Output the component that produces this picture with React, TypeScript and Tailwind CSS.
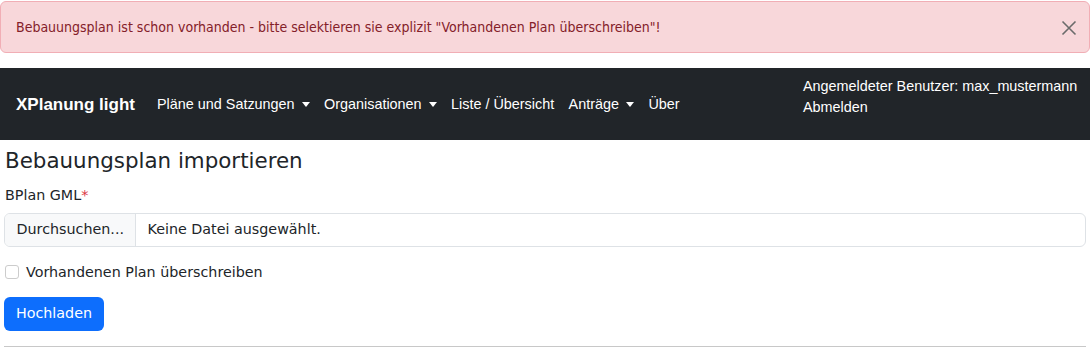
import React from 'react';

const navItems = [
  { label: 'Pläne und Satzungen', dropdown: true },
  { label: 'Organisationen', dropdown: true },
  { label: 'Liste / Übersicht', dropdown: false },
  { label: 'Anträge', dropdown: true },
  { label: 'Über', dropdown: false },
];

const Caret: React.FC = () => (
  <span className="ml-[7px] inline-block h-0 w-0 border-x-[4px] border-t-[5px] border-x-transparent border-t-white align-middle" />
);

const App: React.FC = () => {
  return (
    <div className="h-[358px] w-[1090px] overflow-hidden bg-white font-['DejaVu_Sans',sans-serif] text-[#212529]">
      {/* alert */}
      <div className="mx-0 mt-px flex h-[52px] items-center justify-between rounded-md border border-[#f1aeb5] bg-[#f8d7da] pl-[15px] pr-[12px] pt-px font-['DejaVu_Sans_Condensed','DejaVu_Sans',sans-serif] text-[14px] text-[#842029]">
        <span>Bebauungsplan ist schon vorhanden - bitte selektieren sie explizit "Vorhandenen Plan überschreiben"!</span>
        <svg width="16" height="16" viewBox="0 0 16 16" className="text-[#6b6b6b]">
          <path d="M1.5 1.5 L14.5 14.5 M14.5 1.5 L1.5 14.5" stroke="currentColor" strokeWidth="1.6" />
        </svg>
      </div>

      {/* navbar */}
      <nav className="mt-[15px] flex h-[72px] items-center bg-[#212529] pl-[16px] pt-[2px] font-['Liberation_Sans',Arial,sans-serif] text-white">
        <span className="mr-[22px] text-[17px] font-bold">XPlanung light</span>
        <div className="flex items-center gap-[14.4px] text-[14.4px]">
          {navItems.map((item) => (
            <span key={item.label} className="flex items-center">
              {item.label}
              {item.dropdown && <Caret />}
            </span>
          ))}
        </div>
        <div className="mb-[17px] ml-auto w-[287px] text-[14.4px] leading-[21px]">
          <div>Angemeldeter Benutzer: max_mustermann</div>
          <div>Abmelden</div>
        </div>
      </nav>

      {/* form */}
      <div className="px-[4px]">
        <h1 className="ml-px mt-[7px] text-[21.4px] leading-[28px]">Bebauungsplan importieren</h1>
        <div className="ml-px mt-[10px] text-[14.3px] leading-[20px]">
          BPlan GML<span className="text-[#dc3545]">*</span>
        </div>
        <div className="mt-[8px] flex h-[34px] items-stretch overflow-hidden rounded-md border border-[#dee2e6] text-[14.3px]">
          <span className="flex items-center border-r border-[#dee2e6] bg-[#f8f9fa] px-[11.5px]">Durchsuchen...</span>
          <span className="flex items-center px-[11px]">Keine Datei ausgewählt.</span>
        </div>
        <label className="mt-[15px] flex items-center text-[14.3px] leading-[20px]">
          <span className="ml-px inline-block h-[14px] w-[14px] rounded-[3px] border border-[#ccc] bg-white" />
          <span className="ml-[7px]">Vorhandenen Plan überschreiben</span>
        </label>
        <button className="mt-[15px] flex h-[34px] w-[100px] items-center justify-center rounded-md bg-[#0d6efd] text-[14.3px] text-white">
          Hochladen
        </button>
        <hr className="mt-[15px] border-t border-[#c8c8c8]" />
      </div>
    </div>
  );
};

export default App;
